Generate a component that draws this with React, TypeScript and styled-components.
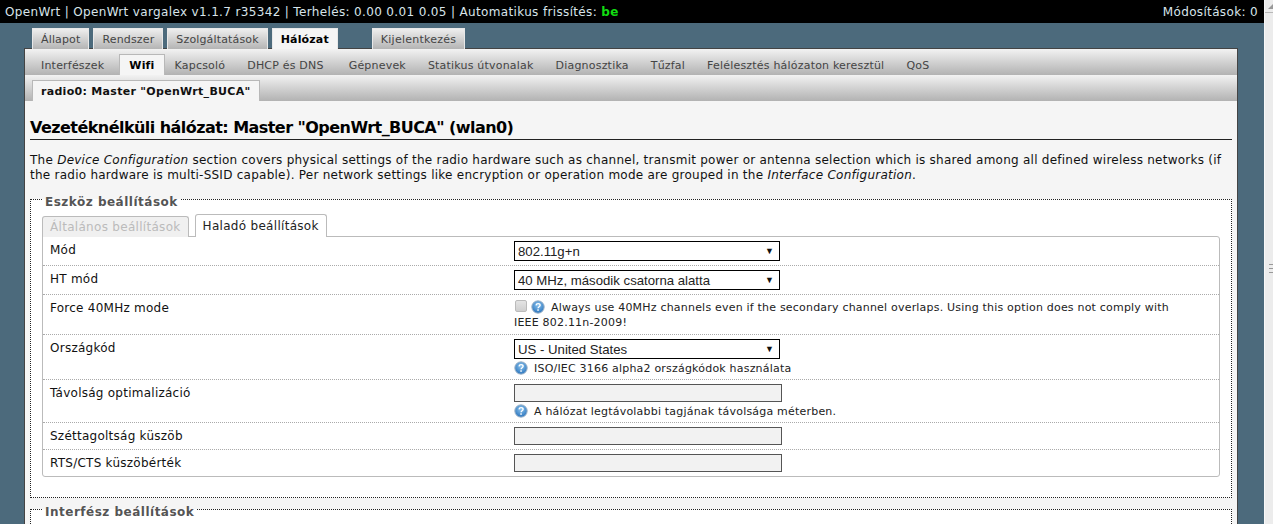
import styled, { createGlobalStyle } from "styled-components";

const GlobalStyle = createGlobalStyle`
  html, body {
    margin: 0;
    padding: 0;
    height: 524px;
    overflow: hidden;
    background: #4c6a7c;
    font-family: "DejaVu Sans", Verdana, sans-serif;
    font-size: 11px;
    color: #111;
  }
`;

const topTabs = ["Állapot", "Rendszer", "Szolgáltatások", "Hálózat"];
const subTabs = [
  "Interfészek",
  "Wifi",
  "Kapcsoló",
  "DHCP és DNS",
  "Gépnevek",
  "Statikus útvonalak",
  "Diagnosztika",
  "Tűzfal",
  "Felélesztés hálózaton keresztül",
  "QoS",
];

const HelpIcon = () => (
  <HelpSvg viewBox="0 0 14 14" aria-hidden="true">
    <defs>
      <radialGradient id="helpFill" cx="50%" cy="35%" r="65%">
        <stop offset="0%" stopColor="#8cc4ee" />
        <stop offset="100%" stopColor="#2a74bd" />
      </radialGradient>
    </defs>
    <circle cx="7" cy="7" r="6.2" fill="url(#helpFill)" stroke="#9fb4c8" />
    <path
      d="M5 5.4c.2-1.2 1-1.8 2.1-1.8 1.2 0 2 .7 2 1.7 0 1.5-2 1.5-2 3"
      fill="none"
      stroke="#fff"
      strokeWidth="1.4"
    />
    <rect x="6.3" y="9.3" width="1.5" height="1.5" fill="#fff" />
  </HelpSvg>
);

const App = () => {
  return (
    <>
      <GlobalStyle />
      <Screen>
        <Page>
          <TopBar>
            <span>
              OpenWrt | OpenWrt vargalex v1.1.7 r35342 | Terhelés: 0.00 0.01
              0.05 | Automatikus frissítés: <Status>be</Status>
            </span>
            <span>Módosítások: 0</span>
          </TopBar>

          <MainTabs>
            {topTabs.map((t) => (
              <MainTab key={t} $active={t === "Hálózat"}>
                {t}
              </MainTab>
            ))}
            <LogoutTab>Kijelentkezés</LogoutTab>
          </MainTabs>

          <Panel>
            <SubTabs>
              {subTabs.map((t) => (
                <SubTab key={t} $active={t === "Wifi"}>
                  {t}
                </SubTab>
              ))}
            </SubTabs>
            <RadioTabs>
              <RadioTab>radio0: Master "OpenWrt_BUCA"</RadioTab>
            </RadioTabs>

            <Content>
              <Title>Vezetéknélküli hálózat: Master "OpenWrt_BUCA" (wlan0)</Title>
              <Intro>
                The <em>Device Configuration</em> section covers physical
                settings of the radio hardware such as channel, transmit power
                or antenna selection which is shared among all defined wireless
                networks (if the radio hardware is multi-SSID capable). Per
                network settings like encryption or operation mode are grouped
                in the <em>Interface Configuration</em>.
              </Intro>

              <Section>
                <Legend>Eszköz beállítások</Legend>
                <InnerTabs>
                  <InnerTab>Általános beállítások</InnerTab>
                  <InnerTab $active>Haladó beállítások</InnerTab>
                </InnerTabs>
                <Table>
                  <Row $height={29}>
                    <RowLabel>Mód</RowLabel>
                    <RowField>
                      <Select>
                        802.11g+n<Arrow>▼</Arrow>
                      </Select>
                    </RowField>
                  </Row>
                  <Row $height={29}>
                    <RowLabel>HT mód</RowLabel>
                    <RowField>
                      <Select>
                        40 MHz, második csatorna alatta<Arrow>▼</Arrow>
                      </Select>
                    </RowField>
                  </Row>
                  <Row $height={40}>
                    <RowLabel>Force 40MHz mode</RowLabel>
                    <RowField>
                      <Note>
                        <CheckBox />
                        <HelpIcon />
                        Always use 40MHz channels even if the secondary channel
                        overlaps. Using this option does not comply with IEEE
                        802.11n-2009!
                      </Note>
                    </RowField>
                  </Row>
                  <Row $height={45}>
                    <RowLabel>Országkód</RowLabel>
                    <RowField>
                      <Select>
                        US - United States<Arrow>▼</Arrow>
                      </Select>
                      <Note>
                        <HelpIcon />
                        ISO/IEC 3166 alpha2 országkódok használata
                      </Note>
                    </RowField>
                  </Row>
                  <Row $height={43}>
                    <RowLabel>Távolság optimalizáció</RowLabel>
                    <RowField>
                      <TextInput />
                      <Note>
                        <HelpIcon />A hálózat legtávolabbi tagjának távolsága
                        méterben.
                      </Note>
                    </RowField>
                  </Row>
                  <Row $height={27}>
                    <RowLabel>Széttagoltság küszöb</RowLabel>
                    <RowField>
                      <TextInput />
                    </RowField>
                  </Row>
                  <Row $height={26} $last>
                    <RowLabel>RTS/CTS küszöbérték</RowLabel>
                    <RowField>
                      <TextInput />
                    </RowField>
                  </Row>
                </Table>
              </Section>

              <Section>
                <Legend>Interfész beállítások</Legend>
              </Section>
            </Content>
          </Panel>
        </Page>

        <Scrollbar>
          <ScrollButton />
          <ScrollThumb>
            <ScrollGrip />
          </ScrollThumb>
        </Scrollbar>
      </Screen>
    </>
  );
};

const Screen = styled.div`
  display: flex;
  width: 1273px;
  height: 524px;
  overflow: hidden;
`;

const Page = styled.div`
  flex: 1;
  min-width: 0;
  overflow: hidden;
`;

const TopBar = styled.div`
  height: 23px;
  background: #000;
  color: #d8e4ea;
  display: flex;
  justify-content: space-between;
  align-items: center;
  padding: 0 6px 0 5px;
  font-size: 12px;
  letter-spacing: 0.35px;
`;

const Status = styled.span`
  color: #11dd11;
  font-weight: bold;
`;

const MainTabs = styled.div`
  display: flex;
  align-items: flex-end;
  height: 26px;
  margin-bottom: -1px;
  padding-left: 32px;
  position: relative;
`;

const MainTab = styled.div<{ $active?: boolean }>`
  height: 21px;
  padding: 0 8px;
  margin-right: 4px;
  display: flex;
  align-items: center;
  font-size: 11px;
  letter-spacing: 0.15px;
  border: 1px solid #e8e8e8;
  border-bottom: none;
  box-sizing: border-box;
  color: ${(p) => (p.$active ? "#000" : "#444")};
  font-weight: ${(p) => (p.$active ? "bold" : "normal")};
  background: ${(p) =>
    p.$active ? "#f5f5f5" : "linear-gradient(#eeeeee, #b4b4b4)"};
  position: relative;
  z-index: 1;
`;

const LogoutTab = styled(MainTab)`
  margin-left: 30px;
  letter-spacing: 0.25px;
`;

const Panel = styled.div`
  margin: 0 26px 0 24px;
  background: #f5f5f5;
  border: 1px solid #444;
  border-bottom: none;
`;

const SubTabs = styled.div`
  display: flex;
  align-items: flex-end;
  height: 26px;
  padding-left: 6px;
  background: linear-gradient(#f2f2f2, #b2b2b2);
`;

const SubTab = styled.div<{ $active?: boolean }>`
  height: 21px;
  padding: 0 9px;
  margin: 0 ${(p) => (p.$active ? "0 0 3px" : "2px 0 0")};
  display: flex;
  align-items: center;
  font-size: 11px;
  letter-spacing: 0.2px;
  box-sizing: border-box;
  color: ${(p) => (p.$active ? "#000" : "#444")};
  font-weight: ${(p) => (p.$active ? "bold" : "normal")};
  background: ${(p) => (p.$active ? "#f5f5f5" : "transparent")};
  border: 1px solid ${(p) => (p.$active ? "#b8b8b8" : "transparent")};
  border-bottom: none;

  &:nth-child(4) {
    margin-right: 5px;
  }
`;

const RadioTabs = styled.div`
  display: flex;
  align-items: flex-end;
  height: 26px;
  padding-left: 7px;
  background: linear-gradient(#f2f2f2, #b2b2b2);
`;

const RadioTab = styled.div`
  height: 21px;
  padding: 0 8px;
  display: flex;
  align-items: center;
  box-sizing: border-box;
  font-size: 11px;
  font-weight: bold;
  letter-spacing: 0.3px;
  color: #111;
  background: #f5f5f5;
  border: 1px solid #b8b8b8;
  border-bottom: none;
`;

const Content = styled.div`
  padding: 17px 5px 0;
`;

const Title = styled.h2`
  margin: 0;
  font-size: 16px;
  line-height: 20px;
  font-weight: bold;
  letter-spacing: -0.55px;
  color: #000;
  border-bottom: 1px solid #222;
  height: 21px;
`;

const Intro = styled.p`
  margin: 13px 0 0;
  font-size: 12px;
  line-height: 15px;
  letter-spacing: 0.25px;
  color: #111;
`;

const Section = styled.fieldset`
  margin: 6px 0 0;
  padding: 4px 11px 20px;
  border: 1px dotted #222;
  background: #fff;
  min-inline-size: 0;

  & + & {
    margin-top: 1px;
  }
`;

const Legend = styled.legend`
  margin-left: 1px;
  padding: 6px 2px 0;
  font-size: 12px;
  font-weight: bold;
  letter-spacing: 0.5px;
  color: #555;
`;

const InnerTabs = styled.div`
  display: flex;
  align-items: flex-end;
  gap: 6px;
  height: 24px;
  margin-bottom: -1px;
`;

const InnerTab = styled.div<{ $active?: boolean }>`
  height: ${(p) => (p.$active ? "22px" : "20px")};
  padding: 0 7px;
  display: flex;
  align-items: center;
  font-size: 12px;
  letter-spacing: 0.3px;
  color: ${(p) => (p.$active ? "#222" : "#bbb")};
  background: ${(p) => (p.$active ? "#fff" : "#f0f0f0")};
  border: 1px solid #bbb;
  border-bottom: none;
  border-radius: 3px 3px 0 0;
  position: relative;
  z-index: 1;
`;

const Table = styled.div`
  border: 1px solid #bbb;
  border-radius: 0 3px 3px 3px;
  background: #fff;
`;

const Row = styled.div<{ $height: number; $last?: boolean }>`
  display: grid;
  grid-template-columns: 464px 1fr;
  height: ${(p) => p.$height}px;
  box-sizing: border-box;
  border-bottom: ${(p) => (p.$last ? "none" : "1px dotted #aaa")};
  padding: 4px 7px 0;
`;

const RowLabel = styled.div`
  font-size: 12px;
  line-height: 18px;
  letter-spacing: 0.25px;
  color: #111;
`;

const RowField = styled.div`
  display: flex;
  flex-direction: column;
  align-items: flex-start;
`;

const Select = styled.div`
  box-sizing: border-box;
  width: 266px;
  height: 20px;
  padding: 0 5px 0 3px;
  display: flex;
  justify-content: space-between;
  align-items: center;
  border: 1px solid #000;
  background: #fff;
  font-family: "Liberation Sans", Arial, sans-serif;
  font-size: 13.2px;
  color: #222;
`;

const Arrow = styled.span`
  font-size: 9px;
  color: #111;
`;

const TextInput = styled.div`
  box-sizing: border-box;
  width: 268px;
  height: 18px;
  border: 1px solid #555;
  background: #f2f2f2;
`;

const Note = styled.div`
  max-width: 670px;
  font-size: 11px;
  line-height: 15px;
  color: #222;
  letter-spacing: 0.2px;
  margin-top: 2px;

  &:first-child {
    margin-top: 1px;
  }
`;

const CheckBox = styled.span`
  display: inline-block;
  width: 10px;
  height: 10px;
  margin: 0 4px 0 1px;
  vertical-align: -1px;
  border: 1px solid #bbb;
  border-radius: 2px;
  background: linear-gradient(#e4e4e4, #cfcfcf);
`;

const HelpSvg = styled.svg`
  display: inline-block;
  width: 14px;
  height: 14px;
  margin-right: 6px;
  vertical-align: -3px;
`;

const Scrollbar = styled.div`
  width: 9px;
  flex: none;
  background: #ececec;
  border-left: 1px solid #f8f8f8;
  box-sizing: border-box;
  display: flex;
  flex-direction: column;
  overflow: hidden;
`;

const ScrollButton = styled.div`
  height: 13px;
  flex: none;
  box-sizing: border-box;
  padding: 4px 0 0 3px;
  border-bottom: 1px solid #b8b8b8;

  &::before {
    content: "";
    display: block;
    width: 0;
    border-left: 5px solid transparent;
    border-right: 5px solid transparent;
    border-bottom: 5px solid #999;
  }
`;

const ScrollThumb = styled.div`
  flex: 1;
  display: flex;
  align-items: center;
  padding-left: 4px;
`;

const ScrollGrip = styled.div`
  width: 8px;
  height: 7px;
  flex: none;
  border-top: 1px solid #999;
  border-bottom: 1px solid #999;
  background: linear-gradient(transparent 3px, #999 3px, #999 4px, transparent 4px);
`;

export default App;
